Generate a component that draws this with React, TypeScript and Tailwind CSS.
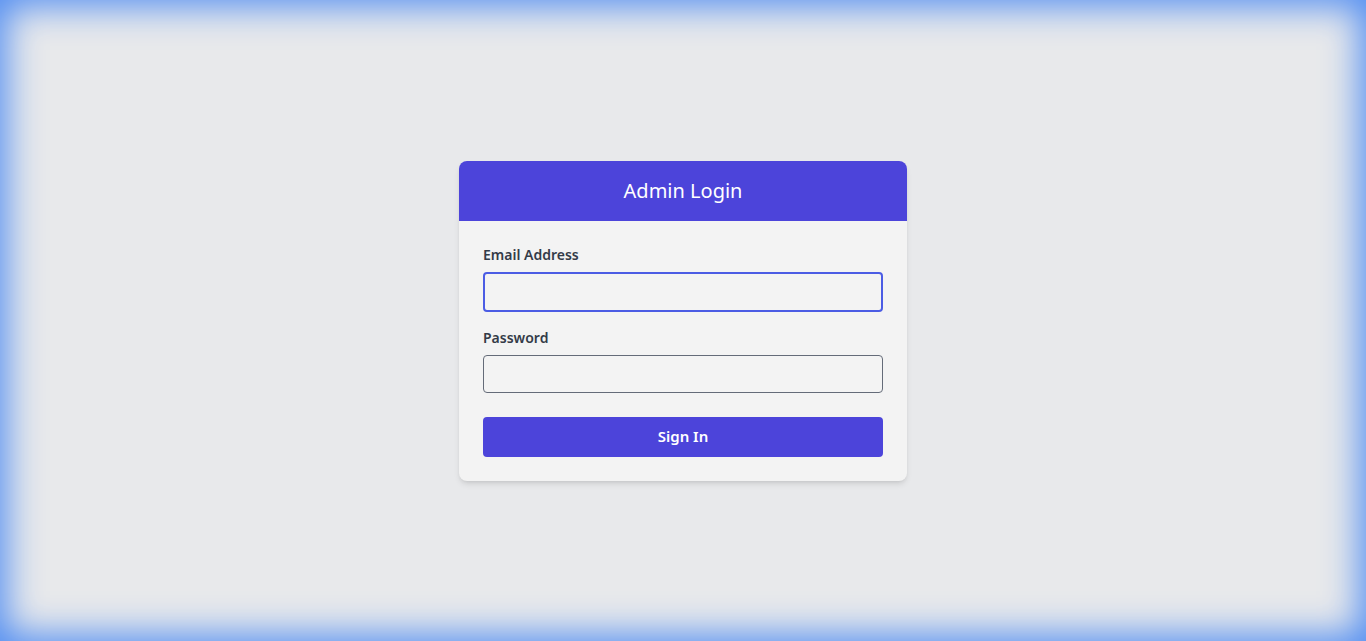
export default function App() {
  return (
    <div
      className="flex min-h-screen items-center justify-center bg-[#e8e9eb] shadow-[inset_0_0_36px_6px_#4f8cf2]"
      style={{ fontFamily: '"Noto Sans", "Open Sans", sans-serif' }}
    >
      <div className="w-[448px] overflow-hidden rounded-lg bg-[#f3f3f3] shadow-md">
        <div className="flex h-[60px] items-center justify-center bg-[#4c44da]">
          <h1 className="text-xl text-white">Admin Login</h1>
        </div>
        <form className="flex flex-col px-6 pt-6 pb-6" onSubmit={(e) => e.preventDefault()}>
          <label className="text-sm font-semibold leading-5 text-[#333b48]">Email Address</label>
          <input
            type="email"
            className="mt-[7px] h-10 w-full rounded border-2 border-[#4b5ce4] bg-transparent px-3 text-sm outline-none"
          />
          <label className="mt-[16px] text-sm font-semibold leading-5 text-[#333b48]">Password</label>
          <input
            type="password"
            className="mt-[7px] h-[38px] w-full rounded border border-[#646b78] bg-transparent px-3 text-sm outline-none"
          />
          <button
            type="submit"
            className="mt-6 h-10 w-full rounded bg-[#4c44da] text-[15px] font-semibold text-white"
          >
            Sign In
          </button>
        </form>
      </div>
    </div>
  );
}
